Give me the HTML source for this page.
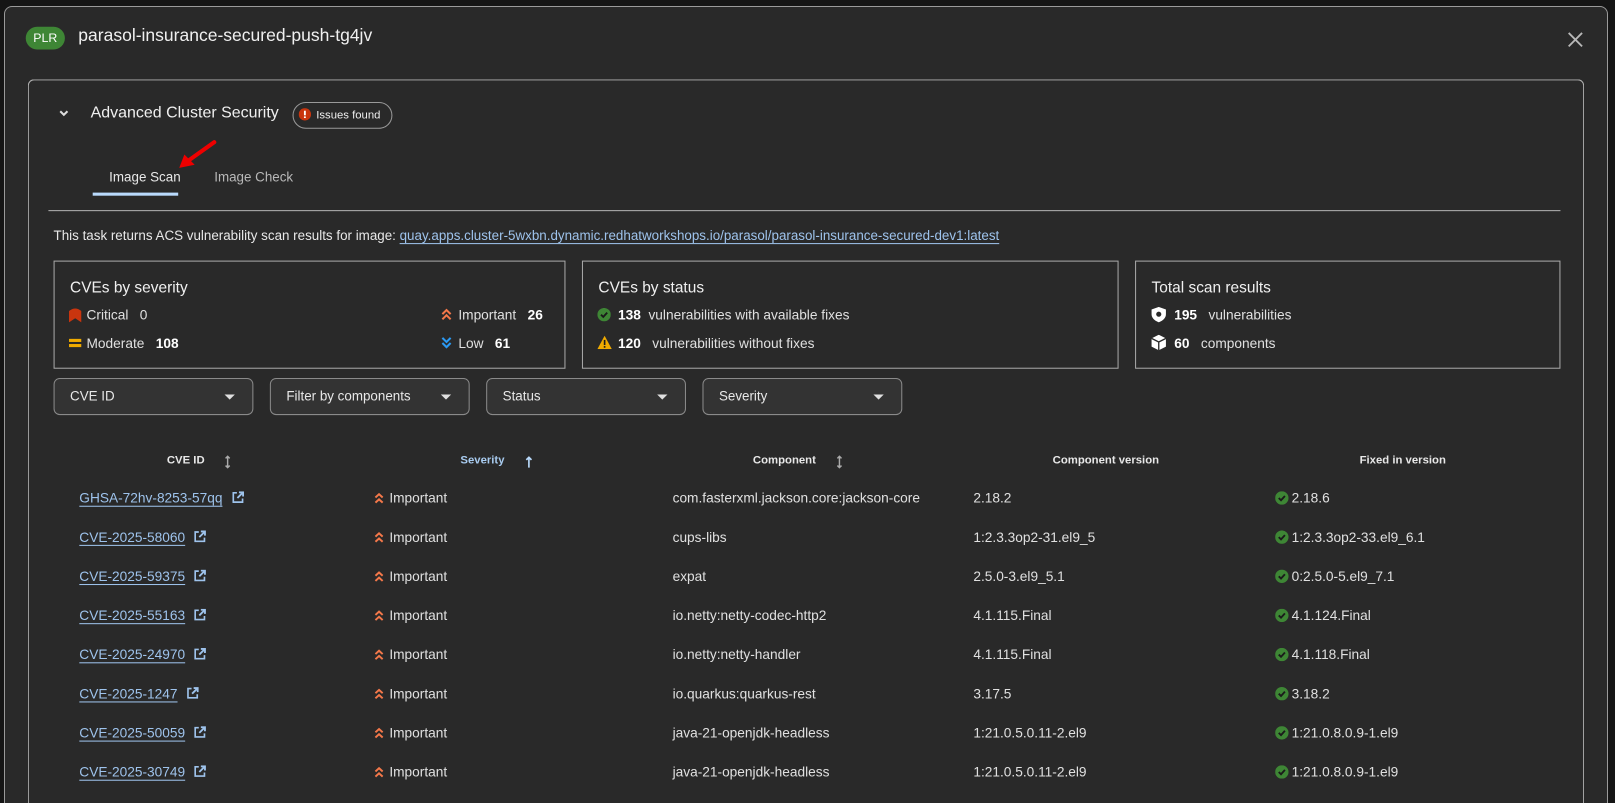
<!DOCTYPE html>
<html><head><meta charset="utf-8"><style>
*{box-sizing:border-box;margin:0;padding:0}
html,body{width:1615px;height:803px;overflow:hidden}
body{background:#151515;font-family:"Liberation Sans",sans-serif;color:#e0e0e0;position:relative}
#clip{position:absolute;left:0;top:0;width:1615px;height:803px;overflow:hidden}
.a{position:absolute;white-space:nowrap}
.modal{position:absolute;left:4px;top:6px;width:1604px;height:797px;background:#292929;border:1px solid #9a9a9a;border-bottom:none;border-radius:8px 8px 0 0}
#w{position:absolute;left:0;top:0;width:1568px;height:780px;transform:scale(1.03);transform-origin:0 0}
.card{position:absolute;left:27px;top:77px;width:1511px;height:703px;border:1px solid #b0b0b0;border-bottom:none;border-radius:6px 6px 0 0}
.box{position:absolute;top:253px;height:105px;border:1px solid #a8a8a8}
.box h3{position:absolute;left:15px;top:17px;font-size:15px;font-weight:normal;color:#f0f0f0}
.sel{position:absolute;top:367px;width:194px;height:36px;border:1px solid #8a8a8a;border-radius:6px;background:#333;font-size:13px;color:#e8e8e8;padding:9px 15px}
.sel:after{content:"";position:absolute;right:17px;top:15px;border-left:5px solid transparent;border-right:5px solid transparent;border-top:5px solid #e0e0e0}
.th{position:absolute;top:441px;font-size:11px;font-weight:bold;color:#e8e8e8}
.r{font-size:13.3px;color:#e0e0e0}
.lnk{color:#9ec3ec;text-decoration:underline;text-underline-offset:3px}
b{color:#fff}
</style></head><body>
<div id="clip">
<div class="modal"></div>
<div id="w">
<div class="a" style="left:25px;top:26px;width:38px;height:22px;border-radius:11px;background:#3e8635;color:#fff;font-size:12px;text-align:center;line-height:22px">PLR</div>
<div class="a" style="left:76px;top:25px;font-size:17px;color:#f0f0f0">parasol-insurance-secured-push-tg4jv</div>
<svg class="a" style="left:1522px;top:31px" width="15" height="15" viewBox="0 0 15 15"><path d="M1 1L14 14M14 1L1 14" stroke="#b8b8b8" stroke-width="1.8"/></svg>
<div class="card"></div>
<svg class="a" style="left:57px;top:106px" width="10" height="8" viewBox="0 0 10 8"><path d="M1.5 2L5 5.5L8.5 2" stroke="#ddd" stroke-width="2" fill="none"/></svg>
<div class="a" style="left:88px;top:101px;font-size:15.5px;color:#f0f0f0">Advanced Cluster Security</div>
<div class="a" style="left:284px;top:99px;width:97px;height:26px;border:1px solid #999;border-radius:13px;font-size:11px;color:#eee;padding:6px 0 0 22px">Issues found</div>
<svg class="a" style="left:290px;top:105px" width="12" height="12" viewBox="0 0 12 12"><circle cx="6" cy="6" r="6" fill="#c9350e"/><rect x="5.1" y="2.5" width="1.8" height="4.5" fill="#fff"/><rect x="5.1" y="8" width="1.8" height="1.6" fill="#fff"/></svg>
<svg class="a" style="left:170px;top:134px" width="44" height="32" viewBox="0 0 44 32"><path d="M38 4L10 24" stroke="#e00" stroke-width="4" stroke-linecap="round"/><path d="M4 29L9 16L19 26Z" fill="#e00"/></svg>
<div class="a" style="left:106px;top:164px;font-size:13px;color:#e8e8e8">Image Scan</div>
<div class="a" style="left:208px;top:164px;font-size:13px;color:#b8b8b8">Image Check</div>
<div class="a" style="left:90px;top:187px;width:83px;height:3px;background:#b9dafc"></div>
<div class="a" style="left:47px;top:204px;width:1468px;height:1px;background:#b0b0b0"></div>
<div class="a" style="left:52px;top:221px;font-size:13px;color:#e8e8e8">This task returns ACS vulnerability scan results for image: <span class="lnk">quay.apps.cluster-5wxbn.dynamic.redhatworkshops.io/parasol/parasol-insurance-secured-dev1:latest</span></div>

<div class="box" style="left:52px;width:497px"><h3>CVEs by severity</h3></div>
<svg class="a" style="left:67px;top:299px" width="12" height="14" viewBox="0 0 12 14"><path d="M0 3Q6 -2 12 3V14L6 10L0 14Z" fill="#c9350e"/></svg>
<div class="a r" style="left:84px;top:298px">Critical&nbsp;&nbsp; 0</div>
<svg class="a" style="left:67px;top:327px" width="12" height="12"><rect y="2" width="12" height="3" fill="#f0ab00"/><rect y="7" width="12" height="3" fill="#f0ab00"/></svg>
<div class="a r" style="left:84px;top:326px">Moderate&nbsp;&nbsp; <b>108</b></div>
<svg class="a" style="left:428px;top:299px" width="11" height="13" viewBox="0 0 11 13"><path d="M1.5 6L5.5 2L9.5 6M1.5 11L5.5 7L9.5 11" stroke="#f4784a" stroke-width="2" fill="none"/></svg>
<div class="a r" style="left:445px;top:298px">Important&nbsp;&nbsp; <b>26</b></div>
<svg class="a" style="left:428px;top:326px" width="11" height="13" viewBox="0 0 11 13"><path d="M1.5 2L5.5 6L9.5 2M1.5 7L5.5 11L9.5 7" stroke="#2b9af3" stroke-width="2" fill="none"/></svg>
<div class="a r" style="left:445px;top:326px">Low&nbsp;&nbsp; <b>61</b></div>

<div class="box" style="left:565px;width:521px"><h3>CVEs by status</h3></div>
<svg class="a" style="left:580px;top:299px" width="13" height="13" viewBox="0 0 13 13"><circle cx="6.5" cy="6.5" r="6.5" fill="#3e8635"/><path d="M3.5 6.5L5.7 8.7L9.5 4.5" stroke="#1a1a1a" stroke-width="1.8" fill="none"/></svg>
<div class="a r" style="left:600px;top:298px"><b>138</b>&nbsp; vulnerabilities with available fixes</div>
<svg class="a" style="left:580px;top:326px" width="14" height="13" viewBox="0 0 14 13"><path d="M7 0L14 13H0Z" fill="#f0ab00"/><rect x="6.2" y="4" width="1.6" height="5" fill="#1a1a1a"/><rect x="6.2" y="10" width="1.6" height="1.6" fill="#1a1a1a"/></svg>
<div class="a r" style="left:600px;top:326px"><b>120</b>&nbsp;&nbsp; vulnerabilities without fixes</div>

<div class="box" style="left:1102px;width:413px"><h3>Total scan results</h3></div>
<svg class="a" style="left:1118px;top:298px" width="14" height="15" viewBox="0 0 14 15"><path d="M7 0L14 2.5V7Q14 12 7 15Q0 12 0 7V2.5Z" fill="#fff"/><circle cx="7" cy="7" r="2.5" fill="#292929"/></svg>
<div class="a r" style="left:1140px;top:298px"><b>195</b>&nbsp;&nbsp; vulnerabilities</div>
<svg class="a" style="left:1118px;top:325px" width="14" height="15" viewBox="0 0 14 15"><path d="M7 0L14 3.5V11.5L7 15L0 11.5V3.5Z" fill="#fff"/><path d="M0 3.5L7 7L14 3.5M7 7V15" stroke="#292929" stroke-width="1.3" fill="none"/></svg>
<div class="a r" style="left:1140px;top:326px"><b>60</b>&nbsp;&nbsp; components</div>

<div class="sel" style="left:52px">CVE ID</div>
<div class="sel" style="left:262px">Filter by components</div>
<div class="sel" style="left:472px">Status</div>
<div class="sel" style="left:682px">Severity</div>

<div class="th" style="left:162px">CVE ID</div>
<svg class="a" style="left:218px;top:442px" width="6" height="13"><path d="M3 1V12M1 3L3 1L5 3M1 10L3 12L5 10" stroke="#aaa" stroke-width="1.4" fill="none"/></svg>
<div class="th" style="left:447px;color:#a8cbef">Severity</div>
<svg class="a" style="left:510px;top:442px" width="7" height="13"><path d="M3.5 2V12M1 4.5L3.5 2L6 4.5" stroke="#b9dafc" stroke-width="1.6" fill="none"/></svg>
<div class="th" style="left:731px">Component</div>
<svg class="a" style="left:812px;top:442px" width="6" height="13"><path d="M3 1V12M1 3L3 1L5 3M1 10L3 12L5 10" stroke="#aaa" stroke-width="1.4" fill="none"/></svg>
<div class="th" style="left:1022px">Component version</div>
<div class="th" style="left:1320px">Fixed in version</div>

<div id="rows"></div>
</div>
</div>
<script>
var d=[["GHSA-72hv-8253-57qq","com.fasterxml.jackson.core:jackson-core","2.18.2","2.18.6"],
["CVE-2025-58060","cups-libs","1:2.3.3op2-31.el9_5","1:2.3.3op2-33.el9_6.1"],
["CVE-2025-59375","expat","2.5.0-3.el9_5.1","0:2.5.0-5.el9_7.1"],
["CVE-2025-55163","io.netty:netty-codec-http2","4.1.115.Final","4.1.124.Final"],
["CVE-2025-24970","io.netty:netty-handler","4.1.115.Final","4.1.118.Final"],
["CVE-2025-1247","io.quarkus:quarkus-rest","3.17.5","3.18.2"],
["CVE-2025-50059","java-21-openjdk-headless","1:21.0.5.0.11-2.el9","1:21.0.8.0.9-1.el9"],
["CVE-2025-30749","java-21-openjdk-headless","1:21.0.5.0.11-2.el9","1:21.0.8.0.9-1.el9"]];
var h="";
d.forEach(function(r,i){var y=476+i*38;
h+='<div class="a r" style="left:77px;top:'+y+'px"><span class="lnk">'+r[0]+'</span> <svg width="12" height="12" viewBox="0 0 12 12" style="margin-left:5px;vertical-align:-1px"><path d="M5 1.5H1.5V10.5H10.5V7" stroke="#9ec3ec" stroke-width="1.6" fill="none"/><path d="M7 1H11V5M11 1L5.5 6.5" stroke="#9ec3ec" stroke-width="1.8" fill="none"/></svg></div>';
h+='<svg class="a" style="left:363px;top:'+(y+2)+'px" width="10" height="12" viewBox="0 0 10 12"><path d="M1.5 5L5 1.8L8.5 5M1.5 10L5 6.8L8.5 10" stroke="#f4784a" stroke-width="1.9" fill="none"/></svg>';
h+='<div class="a r" style="left:378px;top:'+y+'px">Important</div>';
h+='<div class="a r" style="left:653px;top:'+y+'px">'+r[1]+'</div>';
h+='<div class="a r" style="left:945px;top:'+y+'px">'+r[2]+'</div>';
h+='<svg class="a" style="left:1238px;top:'+(y+1)+'px" width="13" height="13" viewBox="0 0 13 13"><circle cx="6.5" cy="6.5" r="6.5" fill="#3e8635"/><path d="M3.5 6.5L5.7 8.7L9.5 4.5" stroke="#1a1a1a" stroke-width="1.8" fill="none"/></svg>';
h+='<div class="a r" style="left:1254px;top:'+y+'px">'+r[3]+'</div>';});
document.getElementById("rows").innerHTML=h;
</script>
</body></html>
